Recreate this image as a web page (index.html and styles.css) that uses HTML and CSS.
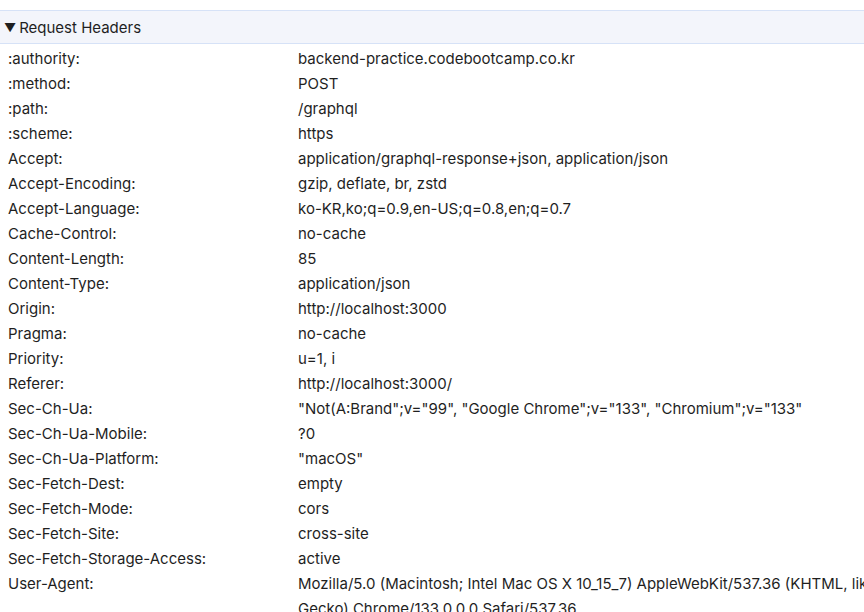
FILE: index.html
```html
<!DOCTYPE html>
<html>
<head>
<meta charset="utf-8">
<link rel="stylesheet" href="styles.css">
</head>
<body>
<div class="panel">
  <div class="section-header"><span class="arrow">▼</span>Request Headers</div>
  <div class="rows">
    <div class="row"><div class="name">:authority:</div><div class="value">backend-practice.codebootcamp.co.kr</div></div>
    <div class="row"><div class="name">:method:</div><div class="value">POST</div></div>
    <div class="row"><div class="name">:path:</div><div class="value">/graphql</div></div>
    <div class="row"><div class="name">:scheme:</div><div class="value">https</div></div>
    <div class="row"><div class="name">Accept:</div><div class="value">application/graphql-response+json, application/json</div></div>
    <div class="row"><div class="name">Accept-Encoding:</div><div class="value">gzip, deflate, br, zstd</div></div>
    <div class="row"><div class="name">Accept-Language:</div><div class="value">ko-KR,ko;q=0.9,en-US;q=0.8,en;q=0.7</div></div>
    <div class="row"><div class="name">Cache-Control:</div><div class="value">no-cache</div></div>
    <div class="row"><div class="name">Content-Length:</div><div class="value">85</div></div>
    <div class="row"><div class="name">Content-Type:</div><div class="value">application/json</div></div>
    <div class="row"><div class="name">Origin:</div><div class="value">http://localhost:3000</div></div>
    <div class="row"><div class="name">Pragma:</div><div class="value">no-cache</div></div>
    <div class="row"><div class="name">Priority:</div><div class="value">u=1, i</div></div>
    <div class="row"><div class="name">Referer:</div><div class="value">http://localhost:3000/</div></div>
    <div class="row"><div class="name">Sec-Ch-Ua:</div><div class="value">"Not(A:Brand";v="99", "Google Chrome";v="133", "Chromium";v="133"</div></div>
    <div class="row"><div class="name">Sec-Ch-Ua-Mobile:</div><div class="value">?0</div></div>
    <div class="row"><div class="name">Sec-Ch-Ua-Platform:</div><div class="value">"macOS"</div></div>
    <div class="row"><div class="name">Sec-Fetch-Dest:</div><div class="value">empty</div></div>
    <div class="row"><div class="name">Sec-Fetch-Mode:</div><div class="value">cors</div></div>
    <div class="row"><div class="name">Sec-Fetch-Site:</div><div class="value">cross-site</div></div>
    <div class="row"><div class="name">Sec-Fetch-Storage-Access:</div><div class="value">active</div></div>
    <div class="row"><div class="name">User-Agent:</div><div class="value"><span class="line">Mozilla/5.0 (Macintosh; Intel Mac OS X 10_15_7) AppleWebKit/537.36 (KHTML, like</span><span class="line">Gecko) Chrome/133.0.0.0 Safari/537.36</span></div></div>
  </div>
</div>
</body>
</html>
```

FILE: styles.css
```css
html, body {
  margin: 0;
  padding: 0;
  background: #ffffff;
  overflow: hidden;
}
body {
  font-family: Inter, "Liberation Sans", Arial, sans-serif;
  font-size: 15px;
  color: #1f1f1f;
}
.panel {
  padding-top: 10px;
  width: 1100px;
}
.section-header {
  box-sizing: border-box;
  height: 34px;
  display: flex;
  align-items: center;
  padding-left: 4px;
  padding-bottom: 0;
  background: #f3f5fb;
  border-top: 1px solid #d6e2f7;
  border-bottom: 1px solid #d6e2f7;
}
.arrow {
  font-size: 12px;
  margin-right: 3px;
}
.rows {
  padding-top: 2px;
}
.row {
  display: flex;
}
.name {
  width: 290px;
  padding-left: 8px;
  flex: none;
  line-height: 25px;
}
.value {
  line-height: 25px;
}
.line {
  display: block;
  white-space: nowrap;
}
```
